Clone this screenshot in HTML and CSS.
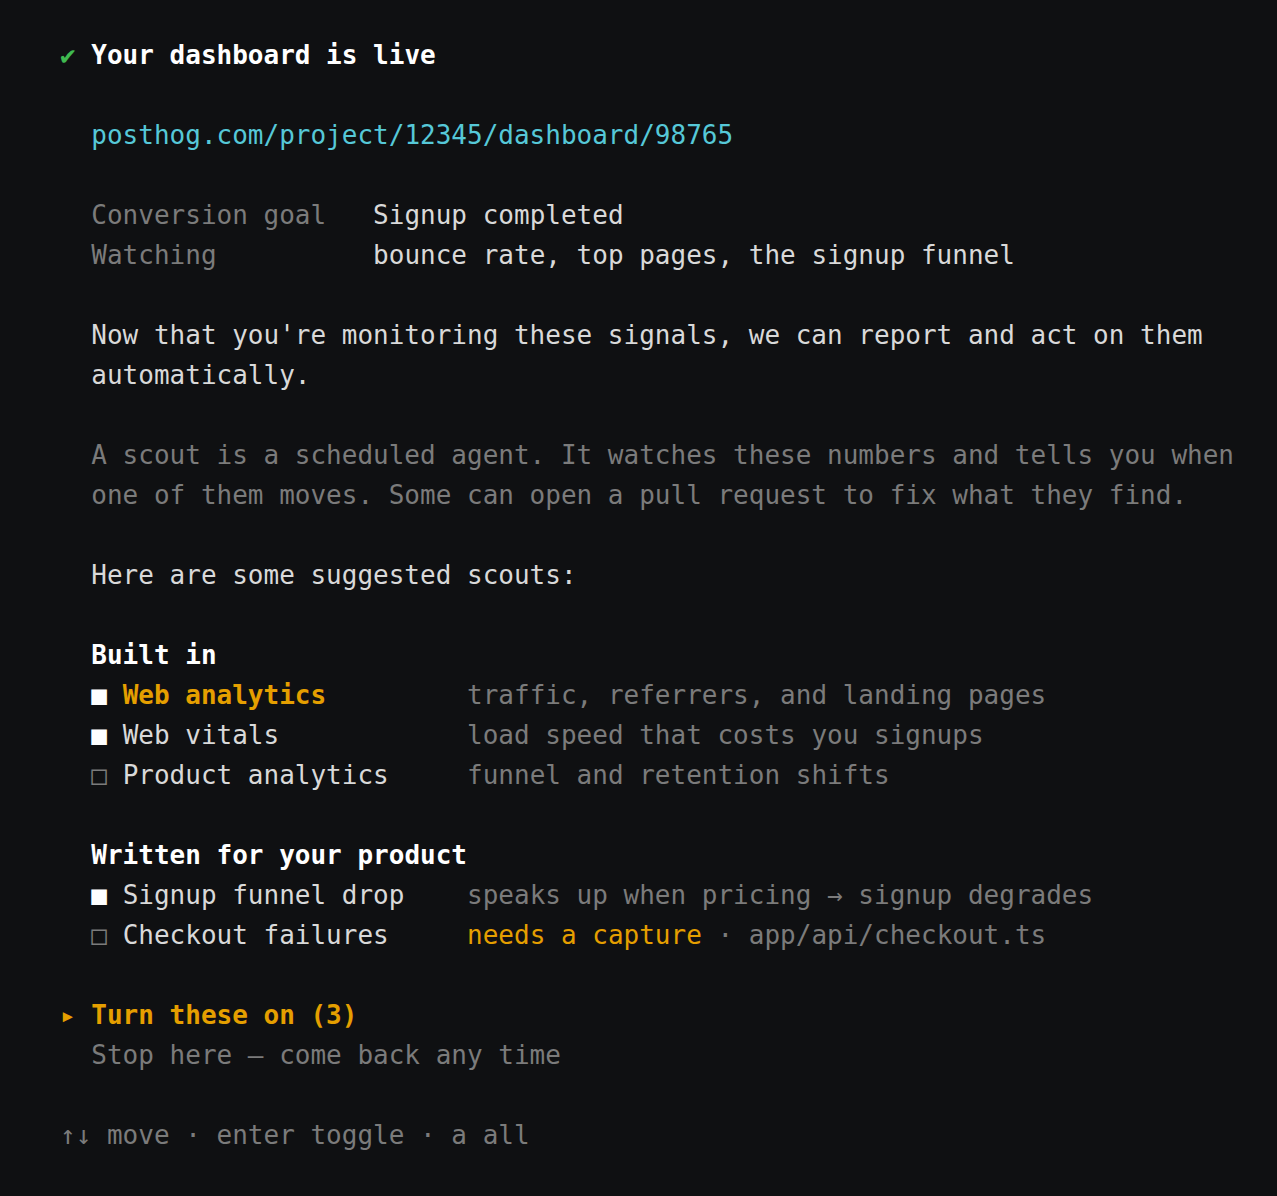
FILE: index.html
```html
<!DOCTYPE html>
<html>
<head>
<meta charset="utf-8">
<link rel="stylesheet" href="styles.css">
</head>
<body>
<main class="term">
<div class="line"><span class="ok">✔</span> <span class="b">Your dashboard is live</span></div>
<div class="line"></div>
<div class="line">  <span class="link">posthog.com/project/12345/dashboard/98765</span></div>
<div class="line"></div>
<div class="line">  <span class="dim">Conversion goal</span>   <span class="txt">Signup completed</span></div>
<div class="line">  <span class="dim">Watching</span>          <span class="txt">bounce rate, top pages, the signup funnel</span></div>
<div class="line"></div>
<div class="line txt">  Now that you're monitoring these signals, we can report and act on them</div>
<div class="line txt">  automatically.</div>
<div class="line"></div>
<div class="line dim">  A scout is a scheduled agent. It watches these numbers and tells you when</div>
<div class="line dim">  one of them moves. Some can open a pull request to fix what they find.</div>
<div class="line"></div>
<div class="line txt">  Here are some suggested scouts:</div>
<div class="line"></div>
<div class="line">  <span class="b">Built in</span></div>
<div class="line">  <span class="box">■</span> <span class="sel">Web analytics</span>         <span class="dim">traffic, referrers, and landing pages</span></div>
<div class="line">  <span class="box">■</span> <span class="txt">Web vitals</span>            <span class="dim">load speed that costs you signups</span></div>
<div class="line">  <span class="boxoff">□</span> <span class="txt">Product analytics</span>     <span class="dim">funnel and retention shifts</span></div>
<div class="line"></div>
<div class="line">  <span class="b">Written for your product</span></div>
<div class="line">  <span class="box">■</span> <span class="txt">Signup funnel drop</span>    <span class="dim">speaks up when pricing → signup degrades</span></div>
<div class="line">  <span class="boxoff">□</span> <span class="txt">Checkout failures</span>     <span class="warn">needs a capture</span><span class="dim"> · app/api/checkout.ts</span></div>
<div class="line"></div>
<div class="line"><span class="arrow">▸</span> <span class="cta">Turn these on (3)</span></div>
<div class="line dim">  Stop here — come back any time</div>
<div class="line"></div>
<div class="line dim">↑↓ move · enter toggle · a all</div>
</main>
</body>
</html>
```
FILE: styles.css
```css
html, body {
  margin: 0;
  padding: 0;
  background: #0f1012;
}
body {
  min-height: 1196px;
}
.term {
  padding: 35px 60px;
  font-family: "DejaVu Sans Mono", "Liberation Mono", monospace;
  font-size: 26px;
  line-height: 40px;
  color: #d9d9d9;
}
.line {
  white-space: pre;
  height: 40px;
}
.ok { color: #3fb950; font-weight: bold; }
.b { color: #ffffff; font-weight: bold; }
.link { color: #56c8d8; }
.dim { color: #7b7b7b; }
.txt { color: #d9d9d9; }
.box { color: #ffffff; }
.boxoff { color: #7b7b7b; }
.sel { color: #e59f00; font-weight: bold; }
.warn { color: #e59f00; }
.arrow { color: #e59f00; }
.cta { color: #e59f00; font-weight: bold; }
```
